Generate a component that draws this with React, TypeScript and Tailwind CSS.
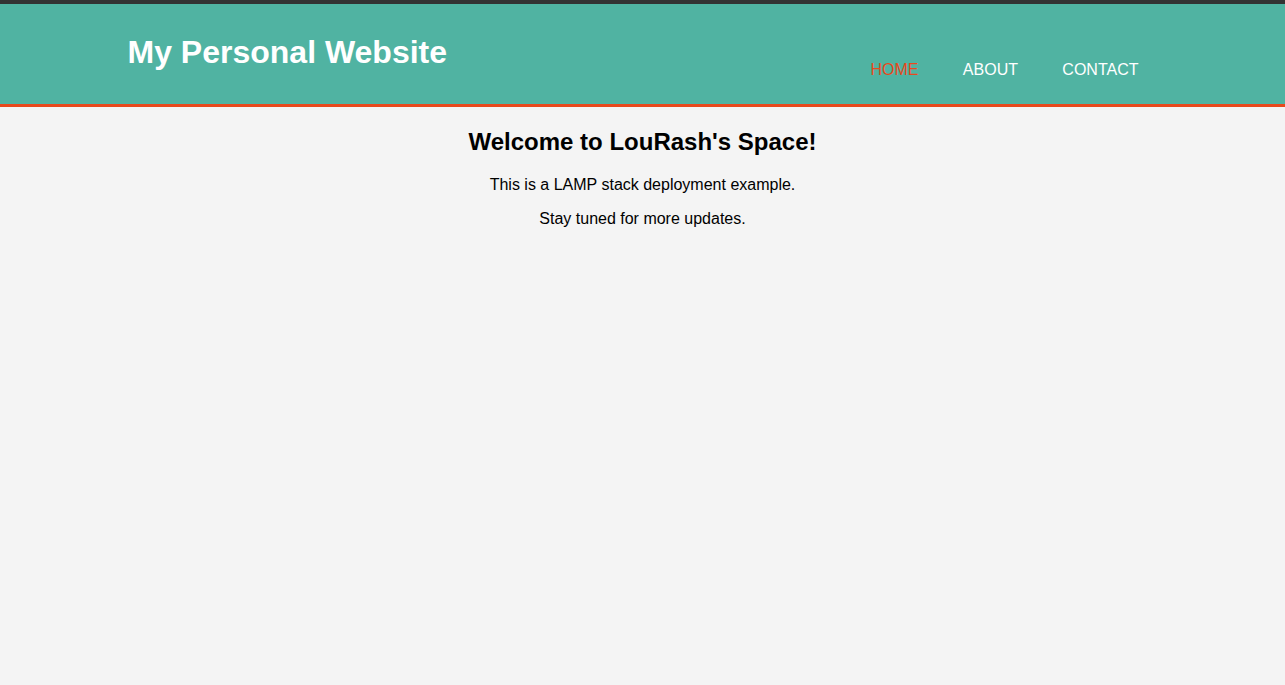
const navItems = [
  { label: 'Home', active: true },
  { label: 'About', active: false },
  { label: 'Contact', active: false },
];

export default function App() {
  return (
    <div className="min-h-screen bg-[#f4f4f4] font-['Liberation_Sans',Arial,sans-serif] text-black">
      <div className="h-1 bg-[#333333]" />
      <header className="min-h-[103px] bg-[#50b3a2] pt-[30px] border-b-[3px] border-[#e8491d] text-white">
        <div className="mx-auto flex w-[80%] justify-between">
          <h1 className="-ml-px text-[32px] font-bold leading-[36.8px]">My Personal Website</h1>
          <nav className="mt-[27px] -mr-0.5">
            <ul className="flex gap-[4.4px] text-base leading-[18.4px] uppercase">
              {navItems.map((item) => (
                <li key={item.label} className="px-5">
                  <a className={item.active ? 'text-[#e8491d]' : 'text-white'}>{item.label}</a>
                </li>
              ))}
            </ul>
          </nav>
        </div>
      </header>
      <main className="mx-auto w-[80%] pt-[21px] text-center">
        <h2 className="text-2xl font-bold leading-[27.6px]">Welcome to LouRash's Space!</h2>
        <p className="mt-5 text-base leading-[18.4px]">This is a LAMP stack deployment example.</p>
        <p className="mt-4 text-base leading-[18.4px]">Stay tuned for more updates.</p>
      </main>
    </div>
  );
}
